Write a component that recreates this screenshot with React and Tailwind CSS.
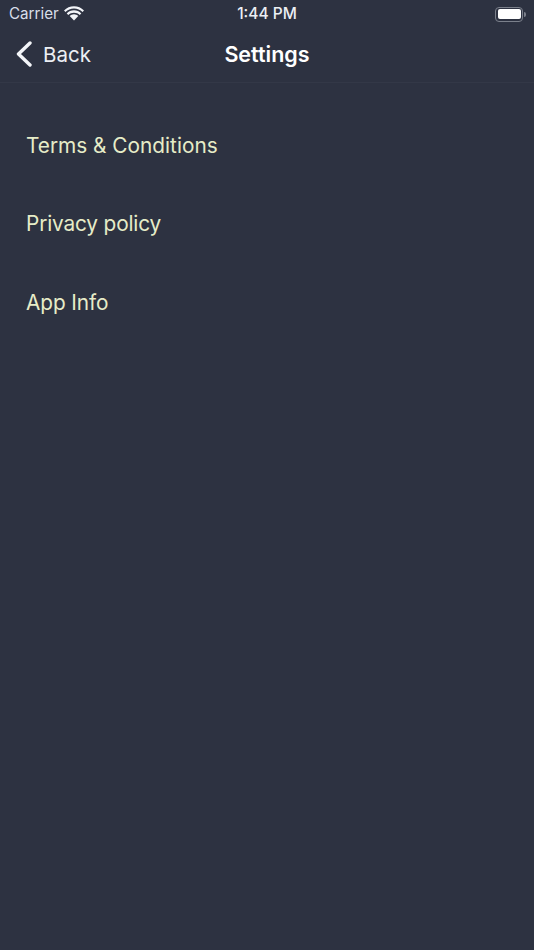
export default function App() {
  return (
    <div className="w-[534px] h-[950px] bg-[#2d3241] flex flex-col font-['Inter',sans-serif] overflow-hidden">
      <div className="h-[28px] flex items-center justify-between pl-[9px] pr-[8px] relative text-[#eceff4]">
        <div className="flex items-center gap-[5px]">
          <span className="text-[15.2px] leading-none text-[#d8dee9]">Carrier</span>
          <svg width="20" height="15" viewBox="0 0 20 15" fill="#f2f4f8">
            <path d="M10 2.6c-3.3 0-6.3 1.3-8.5 3.4L0 4.4C2.6 1.8 6.1.2 10 .2s7.4 1.6 10 4.2L18.500 6C16.300 3.900 13.300 2.600 10 2.600z" />
            <path d="M10 6.700c-2.200 0-4.200.9-5.700 2.300L2.700 7.400C4.600 5.500 7.200 4.300 10 4.300s5.400 1.200 7.300 3.100L15.700 9C14.200 7.600 12.200 6.700 10 6.700z" />
            <path d="M10 8.300c1.700 0 3.200.7 4.300 1.800L10 14.500 5.700 10.100C6.800 9 8.300 8.300 10 8.300z" />
          </svg>
        </div>
        <span className="absolute left-0 right-0 text-center text-[15.5px] font-medium leading-none text-[#eceff4]">1:44 PM</span>
        <div className="flex items-center gap-[1px]">
          <div className="w-[28px] h-[15px] rounded-[4px] border border-[#7b808b] p-[1.5px]">
            <div className="w-full h-full rounded-[2px] bg-white" />
          </div>
          <div className="w-[2px] h-[5px] rounded-r-sm bg-[#7b808b]" />
        </div>
      </div>
      <div className="h-[55px] flex items-center justify-center relative border-b border-[#333847]">
        <div className="absolute left-[16px] top-[13px] flex items-center gap-[11px]">
          <svg width="16" height="26" viewBox="0 0 16 26" fill="none" stroke="#f4f6f9" strokeWidth="3.4" strokeLinecap="round" strokeLinejoin="round">
            <path d="M14 2 L2.500 13 L14 24" />
          </svg>
          <span className="text-[20.5px] leading-none text-[#eceff4] pt-[3px]">Back</span>
        </div>
        <span className="text-[21.5px] font-semibold leading-none text-white">Settings</span>
      </div>
      <div className="flex flex-col pt-[47px] pl-[26px]">
        <div className="h-[32px] mb-[46px] flex items-center text-[20.8px] leading-none text-[#e6ecc8]">Terms &amp; Conditions</div>
        <div className="h-[32px] mb-[47px] flex items-center text-[20.8px] tracking-[-0.15px] leading-none text-[#e6ecc8]">Privacy policy</div>
        <div className="h-[32px] flex items-center text-[20.8px] tracking-[-0.1px] leading-none text-[#e6ecc8]">App Info</div>
      </div>
    </div>
  );
}
